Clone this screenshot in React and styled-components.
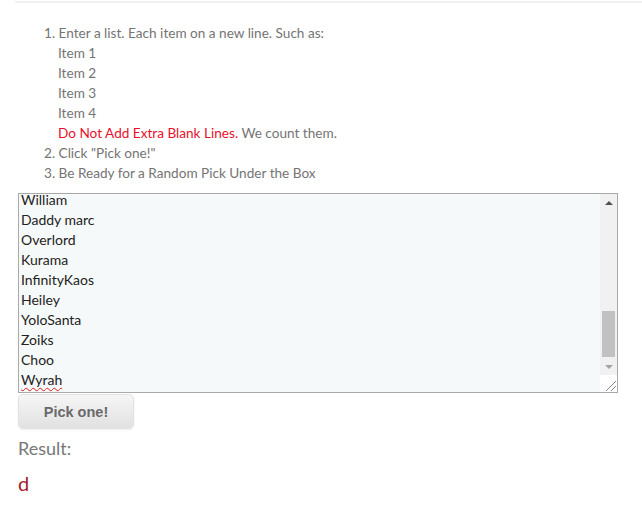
import React from "react";
import styled, { createGlobalStyle } from "styled-components";

const Global = createGlobalStyle`
  html, body { margin: 0; padding: 0; background: #fff; }
  body { font-family: Lato, "Open Sans", sans-serif; }
`;

const Page = styled.div`
  width: 642px;
  padding-top: 1px;
`;

const Rule = styled.div`
  margin-left: 15px;
  border-top: 2px solid #f1f1f1;
`;

const Content = styled.div`
  padding-left: 18px;
`;

const Steps = styled.div`
  margin: 20px 0 0 26px;
  font-size: 13.6px;
  line-height: 20px;
  color: #747474;
`;

const Line = styled.div`
  padding-left: ${(p) => (p.$sub ? "14px" : "0")};
  white-space: nowrap;
`;

const Warn = styled.span`
  color: #e8102c;
`;

const Box = styled.div`
  margin-top: 10px;
  width: 600px;
  height: 200px;
  box-sizing: border-box;
  border: 1px solid #a9a9a9;
  background: #f6f9f9;
  display: flex;
  overflow: hidden;
`;

const Text = styled.div`
  flex: 1;
  padding-left: 2px;
  overflow: hidden;
  font-size: 14px;
  line-height: 20px;
  color: #222;
`;

const Lines = styled.div`
  margin-top: -4px;
`;

const Misspelled = styled.span`
  text-decoration: underline wavy #e02020;
  text-decoration-thickness: 1px;
  text-underline-offset: 2px;
`;

const Scroll = styled.div`
  width: 17px;
  background: #f1f1f1;
  display: flex;
  flex-direction: column;
`;

const Arrow = styled.div`
  height: 17px;
  display: flex;
  align-items: center;
  justify-content: center;
  &::before {
    content: "";
    border-left: 4px solid transparent;
    border-right: 4px solid transparent;
    ${(p) =>
      p.$down
        ? "border-top: 4px solid #a3a3a3;"
        : "border-bottom: 4px solid #505050;"}
  }
`;

const Track = styled.div`
  flex: 1;
  display: flex;
  flex-direction: column;
  padding: 0 2px;
`;

const Thumb = styled.div`
  margin-top: 100px;
  height: 46px;
  background: #c1c1c1;
`;

const Resizer = styled.div`
  height: 17px;
  background: #fff;
  display: flex;
  align-items: flex-end;
  justify-content: flex-end;
`;

const PickButton = styled.button`
  margin-top: 1px;
  width: 116px;
  height: 35px;
  border: 1px solid #e2e2e2;
  border-radius: 5px;
  background: linear-gradient(#f6f6f6, #e1e1e1);
  box-shadow: 0 1px 2px rgba(0, 0, 0, 0.08);
  font-family: "Liberation Sans", Arial, sans-serif;
  font-weight: bold;
  font-size: 14.5px;
  color: #6a6a6a;
  padding: 0;
`;

const ResultLabel = styled.div`
  margin-top: 7px;
  font-size: 18px;
  line-height: 24px;
  color: #777;
`;

const ResultValue = styled.div`
  margin-top: 10px;
  font-size: 20px;
  line-height: 26px;
  color: #a11a2c;
`;

const names = [
  "William",
  "Daddy marc",
  "Overlord",
  "Kurama",
  "InfinityKaos",
  "Heiley",
  "YoloSanta",
  "Zoiks",
  "Choo",
];

export default function App() {
  return (
    <Page>
      <Global />
      <Rule />
      <Content>
        <Steps>
          <Line>1. Enter a list. Each item on a new line. Such as:</Line>
          <Line $sub>Item 1</Line>
          <Line $sub>Item 2</Line>
          <Line $sub>Item 3</Line>
          <Line $sub>Item 4</Line>
          <Line $sub>
            <Warn>Do Not Add Extra Blank Lines.</Warn> We count them.
          </Line>
          <Line>2. Click "Pick one!"</Line>
          <Line>3. Be Ready for a Random Pick Under the Box</Line>
        </Steps>
        <Box>
          <Text>
            <Lines>
              {names.map((n) => (
                <div key={n}>{n}</div>
              ))}
              <div>
                <Misspelled>Wyrah</Misspelled>
              </div>
            </Lines>
          </Text>
          <Scroll>
            <Arrow />
            <Track>
              <Thumb />
            </Track>
            <Arrow $down />
            <Resizer>
              <svg width="14" height="14" viewBox="0 0 14 14">
                <path d="M3 13 L13 3 M8 13 L13 8" stroke="#888" strokeWidth="1" />
              </svg>
            </Resizer>
          </Scroll>
        </Box>
        <PickButton>Pick one!</PickButton>
        <ResultLabel>Result:</ResultLabel>
        <ResultValue>d</ResultValue>
      </Content>
    </Page>
  );
}
